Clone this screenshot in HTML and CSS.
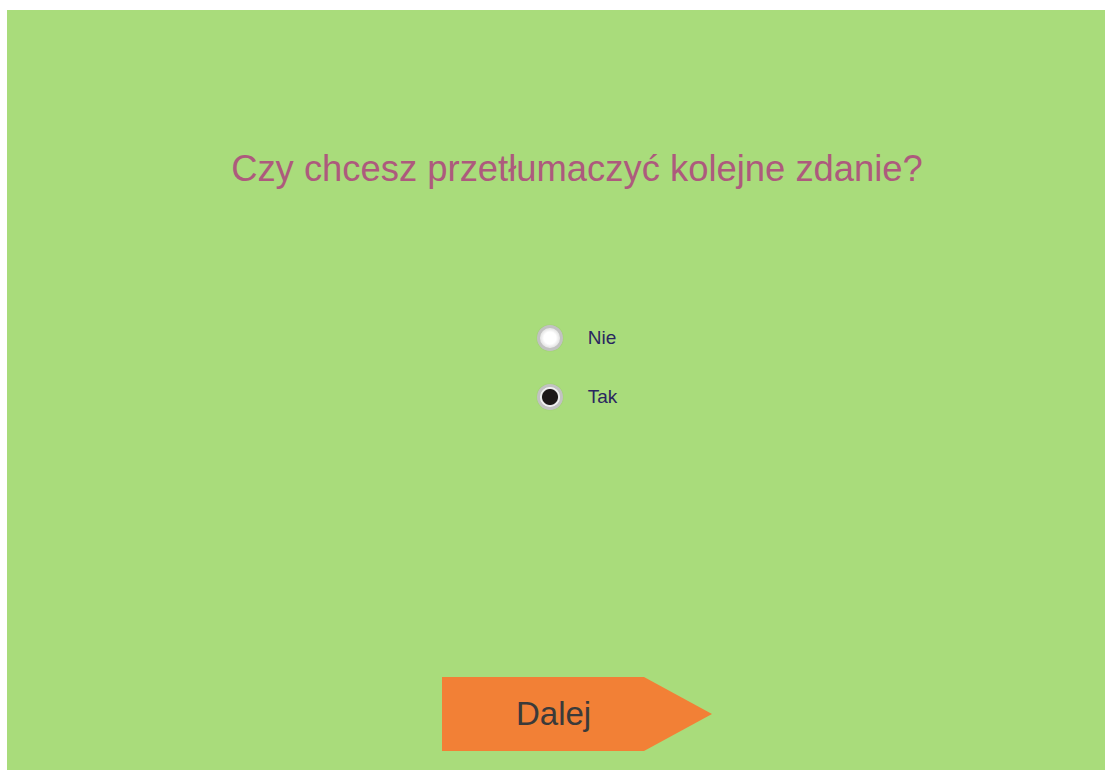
FILE: index.html
```html
<!DOCTYPE html>
<html lang="pl">
<head>
<meta charset="utf-8">
<title>Tłumaczenie</title>
<link rel="stylesheet" href="styles.css">
</head>
<body>
  <main class="stage">
    <h1 class="question">Czy chcesz przetłumaczyć kolejne zdanie?</h1>
    <form class="choices">
      <label class="choice">
        <input type="radio" name="next" value="nie">
        <span class="choice-label">Nie</span>
      </label>
      <label class="choice">
        <input type="radio" name="next" value="tak" checked>
        <span class="choice-label">Tak</span>
      </label>
    </form>
    <button class="next-btn" type="button">Dalej</button>
  </main>
</body>
</html>
```

FILE: styles.css
```css
html, body {
  margin: 0;
  padding: 0;
  background: #ffffff;
  overflow: hidden;
}

body {
  font-family: "Liberation Sans", Arial, sans-serif;
}

.stage {
  box-sizing: border-box;
  margin: 10px 0 0 7px;
  width: 1140px;
  height: 760px;
  background: #a9dc7b;
  padding: 138px 0 19px;
  display: flex;
  flex-direction: column;
  align-items: center;
}

.question {
  margin: 0;
  font-size: 36.4px;
  line-height: 41px;
  font-weight: normal;
  color: #ad5a7d;
}

.choices {
  margin: 136px 0 0;
  display: flex;
  flex-direction: column;
  gap: 33px;
}

.choice {
  display: flex;
  align-items: center;
  gap: 25px;
  height: 26px;
  cursor: pointer;
}

.choice input {
  appearance: none;
  -webkit-appearance: none;
  margin: 0;
  box-sizing: border-box;
  width: 26px;
  height: 26px;
  border-radius: 50%;
  border: 3px solid #c2c2c2;
  background: radial-gradient(circle, #ffffff 0 6px, #e9e9e9 9px);
  box-shadow: 0 0 1px rgba(0, 0, 0, 0.2);
}

.choice input:checked {
  background: radial-gradient(circle, #1c1818 0 7.5px, #e6e6e6 8.5px, #ffffff 10px);
}

.choice-label {
  font-size: 19px;
  color: #2a2660;
}

.next-btn {
  margin-top: 267px;
  box-sizing: border-box;
  width: 270px;
  height: 74px;
  padding: 0 0 0 74px;
  border: 0;
  background: #f28036;
  clip-path: polygon(0 0, 202px 0, 100% 50%, 202px 100%, 0 100%);
  font-family: "Liberation Sans", Arial, sans-serif;
  font-size: 33px;
  color: #3a3a3a;
  text-align: left;
  cursor: pointer;
}
```
